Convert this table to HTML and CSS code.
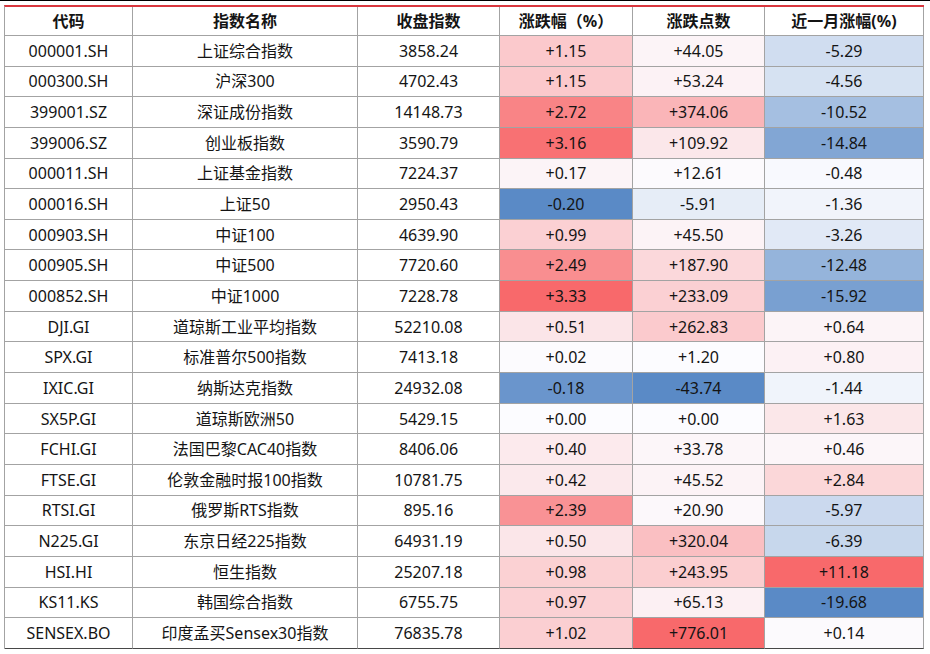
FILE: index.html
```html
<!DOCTYPE html>
<html lang="zh-CN">
<head>
<meta charset="utf-8">
<title>指数涨跌</title>
<link rel="stylesheet" href="styles.css">
</head>
<body>
<div class="topline"></div>
<div class="sheet" id="sheet">
  <div class="c h">代码</div><div class="c h">指数名称</div><div class="c h">收盘指数</div><div class="c h">涨跌幅（%）</div><div class="c h">涨跌点数</div><div class="c h">近一月涨幅(%)</div>

  <div class="c">000001.SH</div><div class="c">上证综合指数</div><div class="c">3858.24</div><div class="c heat" data-col="0">+1.15</div><div class="c heat" data-col="1">+44.05</div><div class="c heat" data-col="2">-5.29</div>
  <div class="c">000300.SH</div><div class="c">沪深300</div><div class="c">4702.43</div><div class="c heat" data-col="0">+1.15</div><div class="c heat" data-col="1">+53.24</div><div class="c heat" data-col="2">-4.56</div>
  <div class="c">399001.SZ</div><div class="c">深证成份指数</div><div class="c">14148.73</div><div class="c heat" data-col="0">+2.72</div><div class="c heat" data-col="1">+374.06</div><div class="c heat" data-col="2">-10.52</div>
  <div class="c">399006.SZ</div><div class="c">创业板指数</div><div class="c">3590.79</div><div class="c heat" data-col="0">+3.16</div><div class="c heat" data-col="1">+109.92</div><div class="c heat" data-col="2">-14.84</div>
  <div class="c">000011.SH</div><div class="c">上证基金指数</div><div class="c">7224.37</div><div class="c heat" data-col="0">+0.17</div><div class="c heat" data-col="1">+12.61</div><div class="c heat" data-col="2">-0.48</div>
  <div class="c">000016.SH</div><div class="c">上证50</div><div class="c">2950.43</div><div class="c heat" data-col="0">-0.20</div><div class="c heat" data-col="1">-5.91</div><div class="c heat" data-col="2">-1.36</div>
  <div class="c">000903.SH</div><div class="c">中证100</div><div class="c">4639.90</div><div class="c heat" data-col="0">+0.99</div><div class="c heat" data-col="1">+45.50</div><div class="c heat" data-col="2">-3.26</div>
  <div class="c">000905.SH</div><div class="c">中证500</div><div class="c">7720.60</div><div class="c heat" data-col="0">+2.49</div><div class="c heat" data-col="1">+187.90</div><div class="c heat" data-col="2">-12.48</div>
  <div class="c">000852.SH</div><div class="c">中证1000</div><div class="c">7228.78</div><div class="c heat" data-col="0">+3.33</div><div class="c heat" data-col="1">+233.09</div><div class="c heat" data-col="2">-15.92</div>
  <div class="c">DJI.GI</div><div class="c">道琼斯工业平均指数</div><div class="c">52210.08</div><div class="c heat" data-col="0">+0.51</div><div class="c heat" data-col="1">+262.83</div><div class="c heat" data-col="2">+0.64</div>
  <div class="c">SPX.GI</div><div class="c">标准普尔500指数</div><div class="c">7413.18</div><div class="c heat" data-col="0">+0.02</div><div class="c heat" data-col="1">+1.20</div><div class="c heat" data-col="2">+0.80</div>
  <div class="c">IXIC.GI</div><div class="c">纳斯达克指数</div><div class="c">24932.08</div><div class="c heat" data-col="0">-0.18</div><div class="c heat" data-col="1">-43.74</div><div class="c heat" data-col="2">-1.44</div>
  <div class="c">SX5P.GI</div><div class="c">道琼斯欧洲50</div><div class="c">5429.15</div><div class="c heat" data-col="0">+0.00</div><div class="c heat" data-col="1">+0.00</div><div class="c heat" data-col="2">+1.63</div>
  <div class="c">FCHI.GI</div><div class="c">法国巴黎CAC40指数</div><div class="c">8406.06</div><div class="c heat" data-col="0">+0.40</div><div class="c heat" data-col="1">+33.78</div><div class="c heat" data-col="2">+0.46</div>
  <div class="c">FTSE.GI</div><div class="c">伦敦金融时报100指数</div><div class="c">10781.75</div><div class="c heat" data-col="0">+0.42</div><div class="c heat" data-col="1">+45.52</div><div class="c heat" data-col="2">+2.84</div>
  <div class="c">RTSI.GI</div><div class="c">俄罗斯RTS指数</div><div class="c">895.16</div><div class="c heat" data-col="0">+2.39</div><div class="c heat" data-col="1">+20.90</div><div class="c heat" data-col="2">-5.97</div>
  <div class="c">N225.GI</div><div class="c">东京日经225指数</div><div class="c">64931.19</div><div class="c heat" data-col="0">+0.50</div><div class="c heat" data-col="1">+320.04</div><div class="c heat" data-col="2">-6.39</div>
  <div class="c">HSI.HI</div><div class="c">恒生指数</div><div class="c">25207.18</div><div class="c heat" data-col="0">+0.98</div><div class="c heat" data-col="1">+243.95</div><div class="c heat" data-col="2">+11.18</div>
  <div class="c">KS11.KS</div><div class="c">韩国综合指数</div><div class="c">6755.75</div><div class="c heat" data-col="0">+0.97</div><div class="c heat" data-col="1">+65.13</div><div class="c heat" data-col="2">-19.68</div>
  <div class="c b">SENSEX.BO</div><div class="c b">印度孟买Sensex30指数</div><div class="c b">76835.78</div><div class="c b heat" data-col="0">+1.02</div><div class="c b heat" data-col="1">+776.01</div><div class="c b heat" data-col="2">+0.14</div>
</div>
<script src="script.js"></script>
</body>
</html>
```

FILE: styles.css
```css
html, body {
  margin: 0;
  padding: 0;
  background: #ffffff;
}

body {
  font-family: "Noto Sans", "Noto Sans CJK SC", sans-serif;
  color: #141414;
  width: 930px;
  height: 654px;
  overflow: hidden;
}

.topline {
  height: 1px;
  background: #000000;
}

.sheet {
  margin: 4px 0 0 4px;
  width: 920px;
  box-sizing: border-box;
  border-top: 2px solid #d9363e;
  border-left: 1px solid #a3a3a3;
  display: grid;
  grid-template-columns: 128px 225px 142px 133px 132px 159px;
  grid-template-rows: 29px repeat(20, 30.65px);
}

.c {
  box-sizing: border-box;
  border-right: 1px solid #a3a3a3;
  border-bottom: 1px solid #a3a3a3;
  display: flex;
  align-items: center;
  justify-content: center;
  font-size: 16px;
  line-height: 1;
  white-space: nowrap;
  background: #ffffff;
}

.h {
  font-weight: bold;
}

.b {
  border-bottom-color: #474747;
}
```

FILE: script.js
```js
(function () {
  var white = [252, 252, 255];
  var red = [248, 105, 107];
  var blue = [90, 138, 198];
  var cells = document.querySelectorAll('.heat');
  var stats = {};
  var i, c, v, k;
  for (i = 0; i < cells.length; i++) {
    c = cells[i];
    k = c.getAttribute('data-col');
    v = parseFloat(c.textContent);
    if (!stats[k]) stats[k] = { max: 0, min: 0 };
    if (v > stats[k].max) stats[k].max = v;
    if (v < stats[k].min) stats[k].min = v;
  }
  function mix(a, b, t) {
    return 'rgb(' + Math.round(a[0] + (b[0] - a[0]) * t) + ',' +
      Math.round(a[1] + (b[1] - a[1]) * t) + ',' +
      Math.round(a[2] + (b[2] - a[2]) * t) + ')';
  }
  for (i = 0; i < cells.length; i++) {
    c = cells[i];
    k = c.getAttribute('data-col');
    v = parseFloat(c.textContent);
    if (v > 0) {
      c.style.background = mix(white, red, v / stats[k].max);
    } else if (v < 0) {
      c.style.background = mix(white, blue, v / stats[k].min);
    } else {
      c.style.background = mix(white, white, 0);
    }
  }
})();
```
